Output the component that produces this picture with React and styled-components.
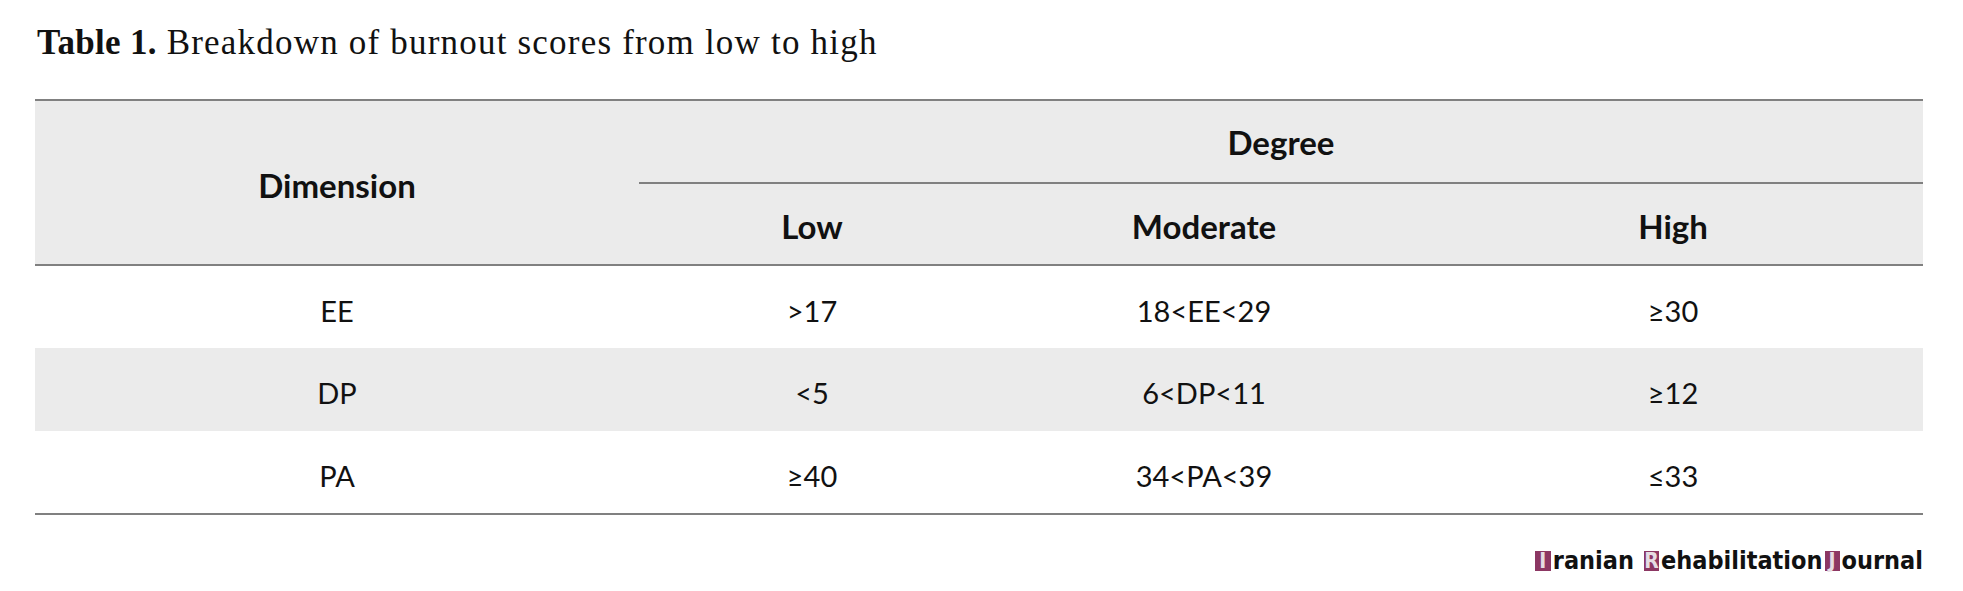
import React from 'react';
import styled, {createGlobalStyle} from "styled-components";

const GlobalStyle = createGlobalStyle`
  html, body {
    margin: 0;
    padding: 0;
    background: #ffffff;
  }
`;

const Page = styled.div`
  width: 1963px;
  height: 591px;
  padding: 0 40px 0 35px;
  box-sizing: border-box;
  display: flex;
  flex-direction: column;
`;

const Caption = styled.div`
  font-family: "Liberation Serif", serif;
  font-size: 35px;
  line-height: 40px;
  letter-spacing: 1.2px;
  color: #111;
  padding: 23px 0 0 2px;
  height: 99px;
  box-sizing: border-box;
  b {
    font-weight: 700;
    letter-spacing: 0.3px;
  }
`;

const Table = styled.table`
  width: 1888px;
  border-collapse: collapse;
  table-layout: fixed;
  border-top: 2px solid #808080;
  border-bottom: 2px solid #808080;
  font-family: Lato, "Open Sans", sans-serif;
  color: #111;
`;

const HeadRow = styled.tr`
  background: #ebebeb;
  height: ${p => p.$h}px;
`;

const HeadCell = styled.th`
  font-size: 33px;
  font-weight: 700;
  text-align: center;
  vertical-align: middle;
  padding: ${p => (p.$line ? '0' : '4px 0 0 0')};
  border-bottom: ${p => (p.$line ? '2px solid #808080' : 'none')};
`;

const Row = styled.tr`
  height: 83px;
  background: ${p => (p.$shade ? '#ebebeb' : '#ffffff')};
  &:first-child td {
    border-top: 2px solid #808080;
  }
`;

const Cell = styled.td`
  font-size: 29px;
  font-weight: 400;
  text-align: center;
  vertical-align: middle;
  padding: 6px 0 0 0;
`;

const Footer = styled.div`
  display: flex;
  justify-content: flex-end;
  padding-top: 35px;
  width: 1890px;
`;

const Logo = styled.div`
  display: flex;
  align-items: flex-end;
  font-family: "DejaVu Sans Condensed", "DejaVu Sans", sans-serif;
  font-weight: 700;
  font-size: 25px;
  line-height: 21px;
  color: #111;
`;

const Word = styled.span`
  display: inline-flex;
  align-items: flex-end;
  margin-right: ${p => (p.$gap ? '10px' : '2px')};
`;

const Box = styled.span`
  display: inline-flex;
  align-items: center;
  justify-content: center;
  width: ${p => p.$w}px;
  height: 20px;
  margin-right: 2px;
  background: #8c3763;
  color: #e6dce3;
  font-size: 21px;
  line-height: 20px;
`;

const rows = [
  ['EE', '>17', '18<EE<29', '≥30'],
  ['DP', '<5', '6<DP<11', '≥12'],
  ['PA', '≥40', '34<PA<39', '≤33'],
];

const App = () => {
  return (<>
    <GlobalStyle/>
    <Page>
      <Caption><b>Table 1.</b> Breakdown of burnout scores from low to high</Caption>
      <Table>
        <colgroup>
          <col style={{width: 604}}/>
          <col style={{width: 346}}/>
          <col style={{width: 438}}/>
          <col style={{width: 500}}/>
        </colgroup>
        <thead>
          <HeadRow $h={83}>
            <HeadCell rowSpan={2}>Dimension</HeadCell>
            <HeadCell colSpan={3} $line>Degree</HeadCell>
          </HeadRow>
          <HeadRow $h={82}>
            <HeadCell>Low</HeadCell>
            <HeadCell>Moderate</HeadCell>
            <HeadCell>High</HeadCell>
          </HeadRow>
        </thead>
        <tbody>
          {rows.map((r, i) => (
            <Row key={r[0]} $shade={i === 1}>
              {r.map((v, j) => <Cell key={j}>{v}</Cell>)}
            </Row>
          ))}
        </tbody>
      </Table>
      <Footer>
        <Logo>
          <Word $gap><Box $w={16}>I</Box>ranian</Word>
          <Word><Box $w={15}>R</Box>ehabilitation</Word>
          <Word><Box $w={15}>J</Box>ournal</Word>
        </Logo>
      </Footer>
    </Page>
  </>)
};

export default App;
